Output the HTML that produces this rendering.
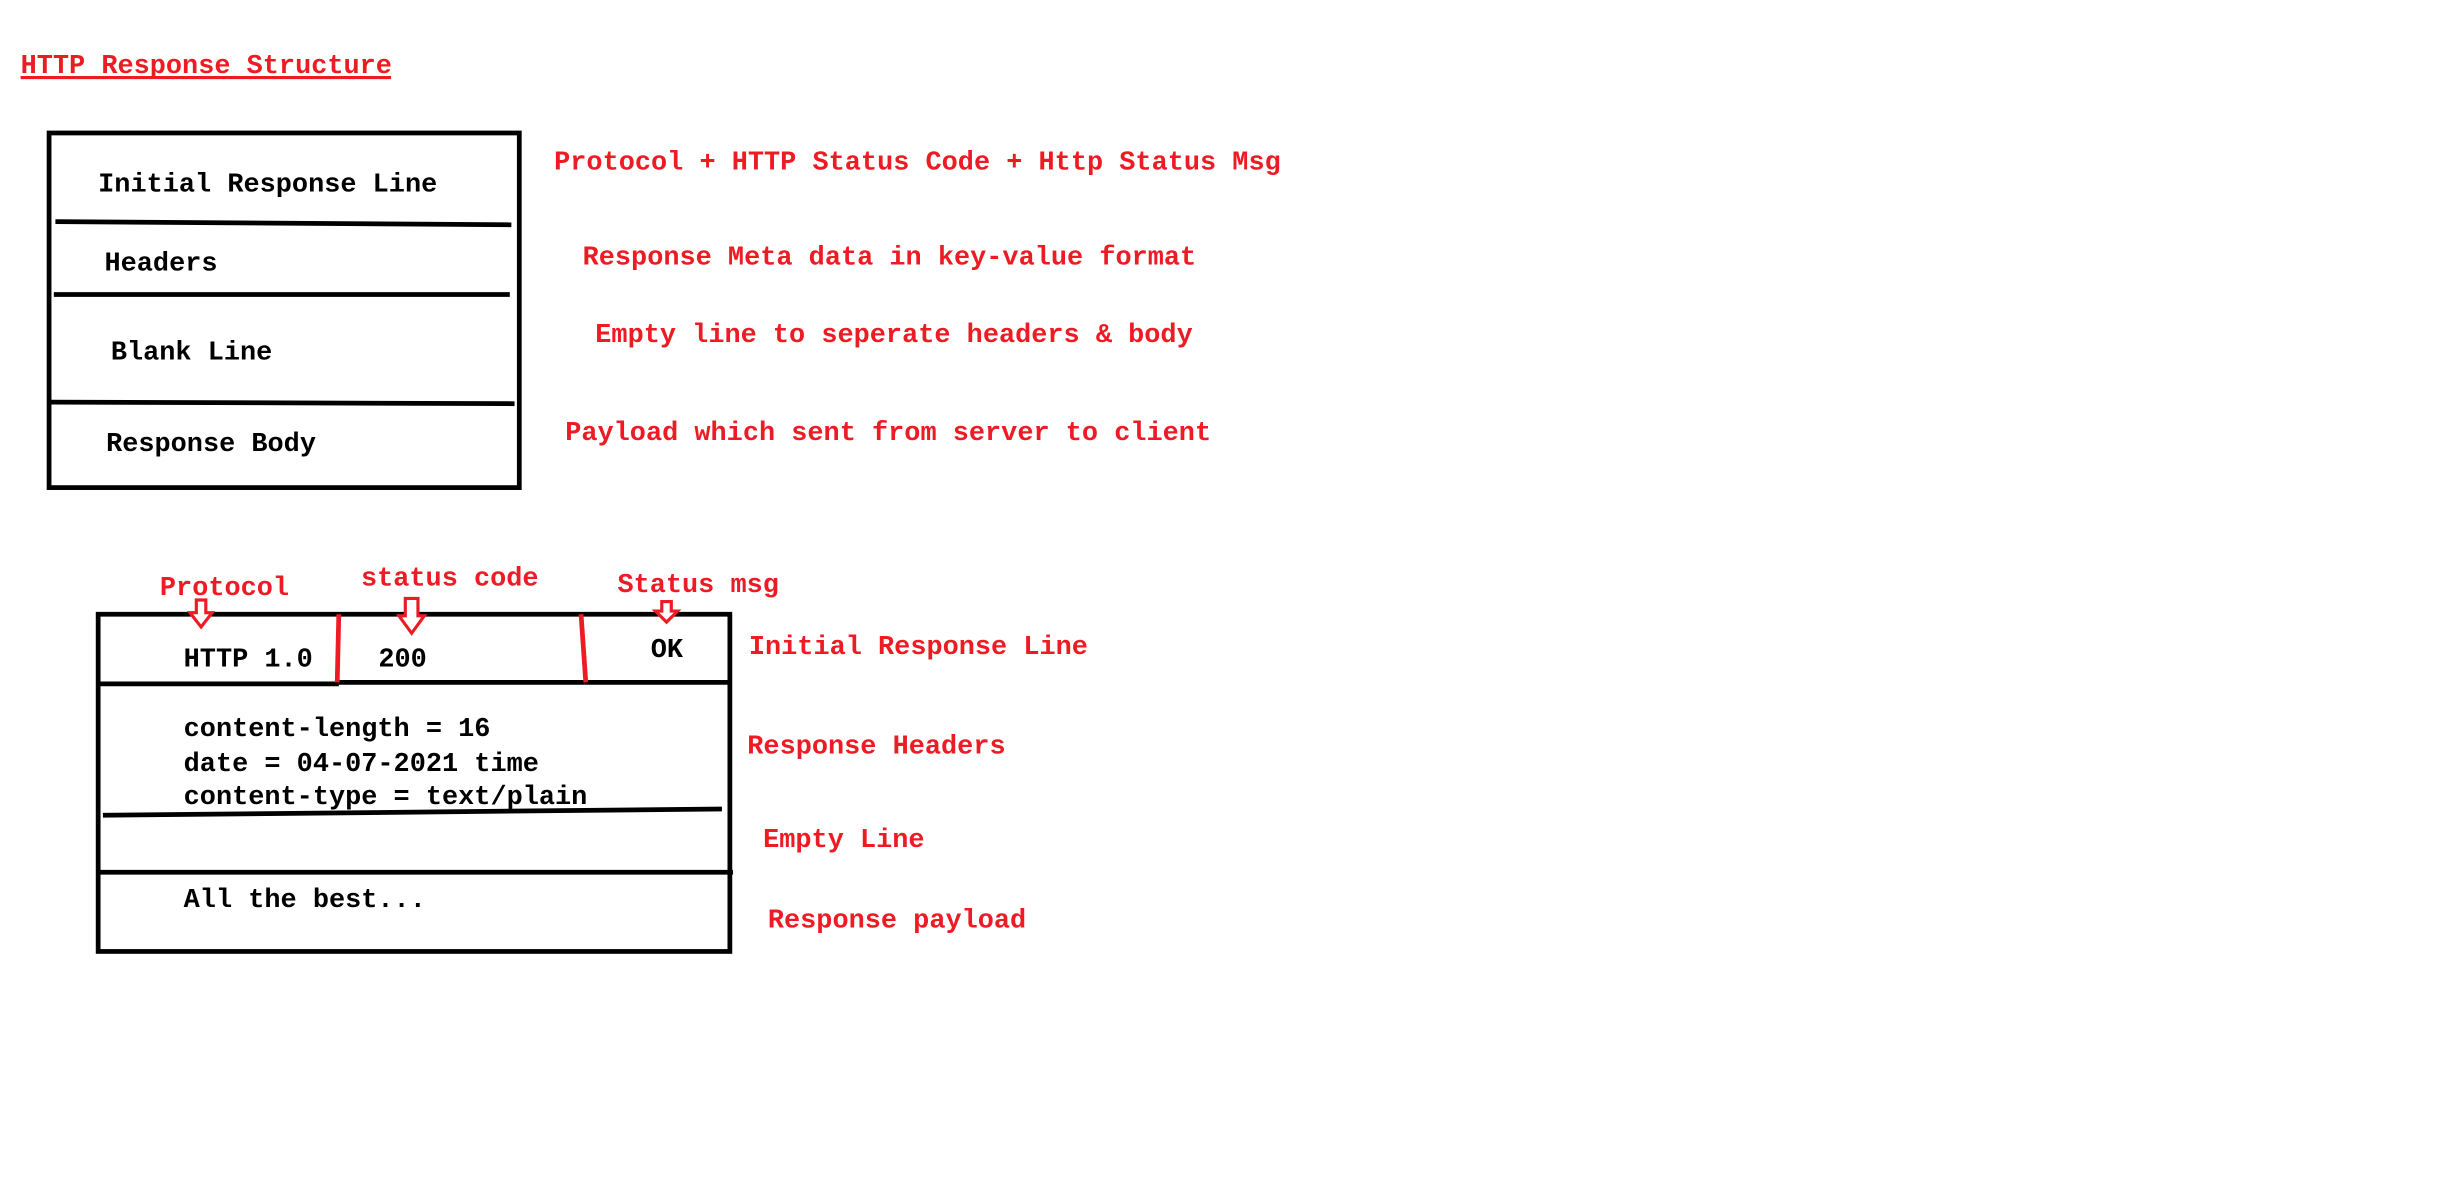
<!DOCTYPE html>
<html><head><style>
html,body{margin:0;padding:0;background:#fff;width:2454px;height:1200px;overflow:hidden}
svg{display:block}
text{font-family:"Liberation Mono",monospace;font-weight:bold;font-size:17px}
.r{fill:#ed1c24}
.k{fill:#000}
</style></head><body>
<svg width="2454" height="1200" viewBox="0 0 1550 758" preserveAspectRatio="none">
<rect width="1550" height="758" fill="#fff"/>
<text x="13" y="46" class="r">HTTP Response Structure</text>
<line x1="13" y1="49" x2="247" y2="49" stroke="#ed1c24" stroke-width="2"/>

<rect x="31" y="84" width="297" height="224" fill="none" stroke="#000" stroke-width="3"/>
<line x1="35" y1="140" x2="323" y2="142" stroke="#000" stroke-width="3"/>
<line x1="34" y1="186" x2="322" y2="186" stroke="#000" stroke-width="3"/>
<line x1="32" y1="254" x2="325" y2="255" stroke="#000" stroke-width="3"/>
<text x="62" y="121" class="k">Initial Response Line</text>
<text x="66" y="171" class="k">Headers</text>
<text x="70" y="227" class="k">Blank Line</text>
<text x="67" y="285" class="k">Response Body</text>

<text x="350" y="107" class="r">Protocol + HTTP Status Code + Http Status Msg</text>
<text x="368" y="167" class="r">Response Meta data in key-value format</text>
<text x="376" y="216" class="r">Empty line to seperate headers &amp; body</text>
<text x="357" y="278" class="r">Payload which sent from server to client</text>

<rect x="62" y="388" width="399" height="213" fill="none" stroke="#000" stroke-width="3"/>
<line x1="62" y1="432" x2="214" y2="432" stroke="#000" stroke-width="3"/>
<line x1="214" y1="431" x2="369" y2="431" stroke="#000" stroke-width="3"/>
<line x1="369" y1="431" x2="461" y2="431" stroke="#000" stroke-width="3"/>
<line x1="65" y1="515" x2="456" y2="511" stroke="#000" stroke-width="3"/>
<line x1="62" y1="551" x2="463" y2="551" stroke="#000" stroke-width="3"/>
<line x1="214" y1="388" x2="213" y2="431" stroke="#ed1c24" stroke-width="3"/>
<line x1="367" y1="388" x2="370" y2="431" stroke="#ed1c24" stroke-width="3"/>

<text x="116" y="421" class="k">HTTP 1.0</text>
<text x="239" y="421" class="k">200</text>
<text x="411" y="415" class="k">OK</text>
<text x="116" y="465" class="k">content-length = 16</text>
<text x="116" y="487" class="k">date = 04-07-2021 time</text>
<text x="116" y="508" class="k">content-type = text/plain</text>
<text x="116" y="573" class="k">All the best...</text>

<text x="101" y="376" class="r">Protocol</text>
<text x="228" y="370" class="r">status code</text>
<text x="390" y="374" class="r">Status msg</text>
<text x="473" y="413" class="r">Initial Response Line</text>
<text x="472" y="476" class="r">Response Headers</text>
<text x="482" y="535" class="r">Empty Line</text>
<text x="485" y="586" class="r">Response payload</text>

<polygon points="124,379 130,379 130,387 134,387 127,396 120,387 124,387" fill="#fff" stroke="#ed1c24" stroke-width="2"/>
<polygon points="256,378 264,378 264,389 268,389 260,400 252,389 256,389" fill="#fff" stroke="#ed1c24" stroke-width="2"/>
<polygon points="418,380 424,380 424,386 428,386 421,393 414,386 418,386" fill="#fff" stroke="#ed1c24" stroke-width="2"/>
</svg>
</body></html>
